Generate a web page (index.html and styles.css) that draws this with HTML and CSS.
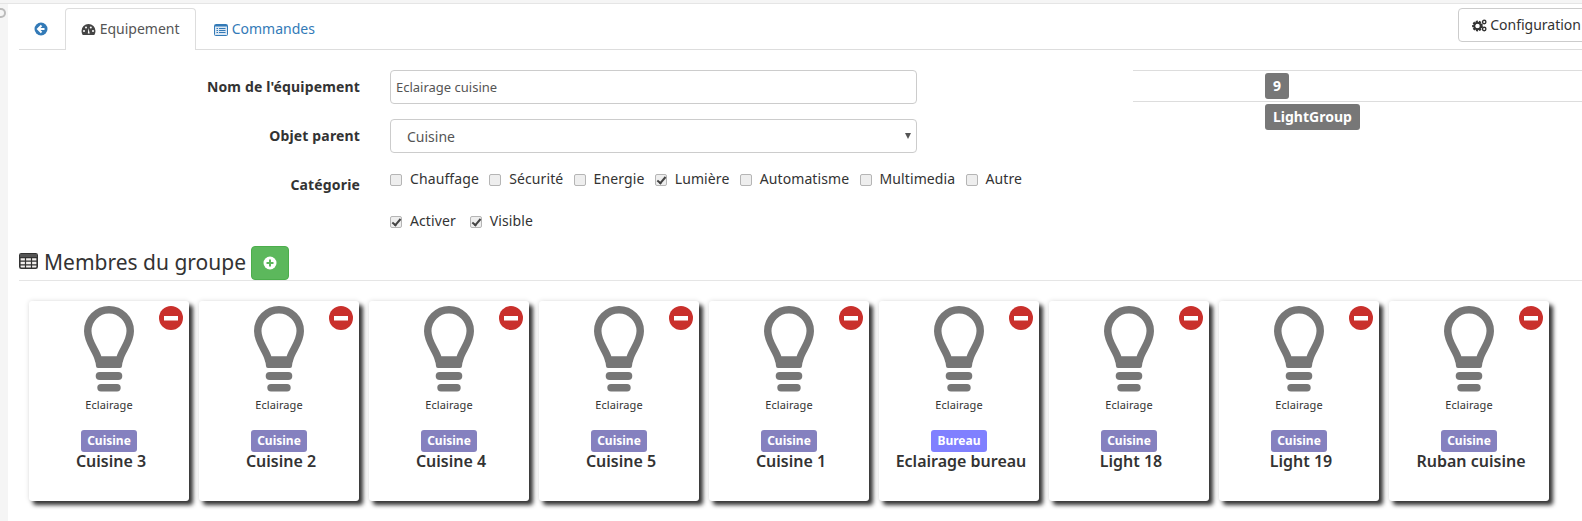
FILE: index.html
```html
<!DOCTYPE html>
<html lang="fr">
<head>
  <meta charset="UTF-8">
  <title>Equipement - Eclairage cuisine</title>
  <link rel="stylesheet" href="styles.css">
</head>
<body>
  <svg class="defs" width="0" height="0">
    <symbol id="bulb" viewBox="0 0 50 86">
      <path d="M14.500 54 C13 45 3.750 37 3.750 25 A21.250 21.250 0 0 1 46.250 25 C46.250 37 37 45 35.500 54 Z" fill="none" stroke="currentColor" stroke-width="7.500" stroke-linejoin="round"/>
      <path d="M11 52 H39 L38 60 Q38 62 36 62 H14 Q12 62 12 60 Z" fill="currentColor"/>
      <rect x="11.700" y="66" width="26.600" height="8" rx="4" fill="currentColor"/>
      <rect x="13.300" y="78" width="23.400" height="7.500" rx="3.700" fill="currentColor"/>
    </symbol>
    <symbol id="remove" viewBox="0 0 24 24">
      <circle cx="12" cy="12" r="12" fill="#c9302c"/>
      <rect x="5" y="10" width="14" height="4.500" fill="#fff"/>
    </symbol>
  </svg>

  <div class="topbar"></div>
  <div class="page">
    <div class="gutter"><span class="gutter-dot"></span></div>
    <div class="content">
      <div class="tabs">
        <a class="tab tab-back">
          <svg class="icon" width="14" height="14" viewBox="0 0 14 14"><circle cx="7" cy="7" r="6.500" fill="#337ab7"/><path d="M7.500 3.500 4 7l3.500 3.500M4.500 7H10.500" fill="none" stroke="#fff" stroke-width="2"/></svg>
        </a>
        <a class="tab active">
          <svg class="icon" width="15" height="13" viewBox="0 0 15 13"><path d="M7.500 1A7 7 0 0 0 .5 8c0 1.500.4 2.800 1.200 4h11.600c.8-1.200 1.200-2.500 1.200-4a7 7 0 0 0-7-7z" fill="#444"/><circle cx="3" cy="8" r="1" fill="#fff"/><circle cx="5" cy="4.500" r="1" fill="#fff"/><circle cx="9.800" cy="4.500" r="1" fill="#fff"/><circle cx="12" cy="8" r="1" fill="#fff"/><path d="M6.800 10.500 7.500 5l1.200 5.500z" fill="#fff"/></svg>
          Equipement
        </a>
        <a class="tab">
          <svg class="icon" width="14" height="12" viewBox="0 0 14 12"><rect x=".5" y=".5" width="13" height="11" rx="1" fill="#dbe7f3" stroke="#337ab7"/><path d="M1 1h12v1.500H1z" fill="#337ab7"/><path d="M2.500 4h1.500v1H2.500zM2.500 6h1.500v1H2.500zM2.500 8h1.500v1H2.500zM5 4h6.500v1H5zM5 6h6.500v1H5zM5 8h6.500v1H5z" fill="#337ab7"/></svg>
          Commandes
        </a>
        <button class="btn-config">
          <svg class="icon" width="15" height="13" viewBox="0 0 15 13"><circle cx="5.500" cy="7" r="4" fill="none" stroke="#333" stroke-width="2.800" stroke-dasharray="1.900 .9"/><circle cx="5.500" cy="7" r="3.300" fill="none" stroke="#333" stroke-width="2"/><circle cx="12.200" cy="3" r="1.700" fill="none" stroke="#333" stroke-width="1.400"/><circle cx="12.200" cy="10" r="1.700" fill="none" stroke="#333" stroke-width="1.400"/></svg>
          Configuration
        </button>
      </div>

      <div class="form-wrap">
        <form class="form">
          <label class="form-label">Nom de l'équipement</label>
          <input class="form-input" type="text" value="Eclairage cuisine">

          <label class="form-label">Objet parent</label>
          <div class="form-select">Cuisine<span class="caret"></span></div>

          <label class="form-label form-label-check">Catégorie</label>
          <div class="check-row">
            <label class="check"><input type="checkbox">Chauffage</label>
            <label class="check"><input type="checkbox">Sécurité</label>
            <label class="check"><input type="checkbox">Energie</label>
            <label class="check"><input type="checkbox" checked>Lumière</label>
            <label class="check"><input type="checkbox">Automatisme</label>
            <label class="check"><input type="checkbox">Multimedia</label>
            <label class="check"><input type="checkbox">Autre</label>
          </div>

          <span></span>
          <div class="check-row check-row-tight">
            <label class="check"><input type="checkbox" checked>Activer</label>
            <label class="check"><input type="checkbox" checked>Visible</label>
          </div>
        </form>

        <div class="info">
          <div class="info-row"><span class="tag">9</span></div>
          <div class="info-last"><span class="tag">LightGroup</span></div>
        </div>
      </div>

      <div class="group-head">
        <svg class="icon icon-table" width="19" height="16" viewBox="0 0 19 16"><rect x=".8" y=".8" width="17.400" height="14.400" rx="1.500" fill="#f3f0ee" stroke="#333" stroke-width="1.600"/><path d="M1 4.700h17M1 8.200h17M1 11.800h17M6.500 4v11M12.500 4v11" stroke="#333" stroke-width="1.200"/><path d="M1 1h17v3H1z" fill="#555"/></svg>
        <h2 class="group-title">Membres du groupe</h2>
        <button class="btn-add">
          <svg width="14" height="14" viewBox="0 0 14 14"><circle cx="7" cy="7" r="6.500" fill="#fff"/><path d="M7 3.500v7M3.500 7h7" stroke="#5cb85c" stroke-width="2"/></svg>
        </button>
      </div>

      <div class="cards">
        <div class="card">
          <svg class="remove"><use href="#remove"/></svg>
          <svg class="bulb"><use href="#bulb"/></svg>
          <div class="card-type">Eclairage</div>
          <span class="card-badge">Cuisine</span>
          <div class="card-name">Cuisine 3</div>
        </div>
        <div class="card">
          <svg class="remove"><use href="#remove"/></svg>
          <svg class="bulb"><use href="#bulb"/></svg>
          <div class="card-type">Eclairage</div>
          <span class="card-badge">Cuisine</span>
          <div class="card-name">Cuisine 2</div>
        </div>
        <div class="card">
          <svg class="remove"><use href="#remove"/></svg>
          <svg class="bulb"><use href="#bulb"/></svg>
          <div class="card-type">Eclairage</div>
          <span class="card-badge">Cuisine</span>
          <div class="card-name">Cuisine 4</div>
        </div>
        <div class="card">
          <svg class="remove"><use href="#remove"/></svg>
          <svg class="bulb"><use href="#bulb"/></svg>
          <div class="card-type">Eclairage</div>
          <span class="card-badge">Cuisine</span>
          <div class="card-name">Cuisine 5</div>
        </div>
        <div class="card">
          <svg class="remove"><use href="#remove"/></svg>
          <svg class="bulb"><use href="#bulb"/></svg>
          <div class="card-type">Eclairage</div>
          <span class="card-badge">Cuisine</span>
          <div class="card-name">Cuisine 1</div>
        </div>
        <div class="card">
          <svg class="remove"><use href="#remove"/></svg>
          <svg class="bulb"><use href="#bulb"/></svg>
          <div class="card-type">Eclairage</div>
          <span class="card-badge card-badge-alt">Bureau</span>
          <div class="card-name">Eclairage bureau</div>
        </div>
        <div class="card">
          <svg class="remove"><use href="#remove"/></svg>
          <svg class="bulb"><use href="#bulb"/></svg>
          <div class="card-type">Eclairage</div>
          <span class="card-badge">Cuisine</span>
          <div class="card-name">Light 18</div>
        </div>
        <div class="card">
          <svg class="remove"><use href="#remove"/></svg>
          <svg class="bulb"><use href="#bulb"/></svg>
          <div class="card-type">Eclairage</div>
          <span class="card-badge">Cuisine</span>
          <div class="card-name">Light 19</div>
        </div>
        <div class="card">
          <svg class="remove"><use href="#remove"/></svg>
          <svg class="bulb"><use href="#bulb"/></svg>
          <div class="card-type">Eclairage</div>
          <span class="card-badge">Cuisine</span>
          <div class="card-name">Ruban cuisine</div>
        </div>
      </div>
    </div>
  </div>
</body>
</html>
```

FILE: styles.css
```css
html, body {
  height: 100%;
}
body {
  margin: 0;
  font-family: "Noto Sans", "Open Sans", sans-serif;
  font-size: 14px;
  color: #333;
  background-color: #fff;
  overflow: hidden;
}
.defs {
  display: block;
  height: 0;
}
.topbar {
  height: 3px;
  background-color: #f5f5f5;
  border-bottom: 1px solid #e5e5e5;
}
.page {
  display: flex;
  height: 517px;
}
.gutter {
  width: 8px;
  flex: none;
  background-color: #f5f5f5;
}
.gutter-dot {
  display: block;
  width: 6px;
  height: 10px;
  margin-top: 4px;
  border: 2px solid #bbb;
  border-left: none;
  border-radius: 0 6px 6px 0;
  box-sizing: border-box;
}
.content {
  flex: 1;
  min-width: 0;
  padding-left: 11px;
}
.icon {
  vertical-align: -2px;
}

/* tabs */
.tabs {
  display: flex;
  height: 46px;
  padding-top: 4px;
  box-sizing: border-box;
  border-bottom: 1px solid #ddd;
}
.tab {
  display: block;
  height: 42px;
  box-sizing: border-box;
  padding: 11px 15px 0;
  color: #337ab7;
  border: 1px solid transparent;
  border-bottom: none;
  border-radius: 4px 4px 0 0;
  line-height: 18px;
  white-space: nowrap;
}
.tab-back {
  width: 46px;
  padding-left: 14px;
}
.tab.active {
  width: 131px;
  margin-right: 2px;
  color: #555;
  background-color: #fff;
  border-color: #ddd;
}
.btn-config {
  height: 34px;
  margin-left: auto;
  margin-right: -12px;
  padding: 0 12px 2px 13px;
  font: inherit;
  color: #333;
  background-color: #fff;
  border: 1px solid #ccc;
  border-radius: 4px;
  white-space: nowrap;
}

/* form */
.form-wrap {
  display: flex;
  padding-top: 20px;
}
.form {
  display: grid;
  grid-template-columns: 341px 527px;
  column-gap: 30px;
  row-gap: 15px;
  align-items: center;
  width: 898px;
}
.form-label {
  padding-bottom: 2px;
  text-align: right;
  font-weight: 700;
  letter-spacing: .15px;
}
.form-label-check {
  align-self: start;
  padding: 7px 0 0;
}
.form-input, .form-select {
  height: 34px;
  box-sizing: border-box;
  border: 1px solid #ccc;
  border-radius: 4px;
  color: #555;
  background-color: #fff;
}
.form-input {
  width: 100%;
  padding: 0 5px;
  font: inherit;
  font-size: 13px;
}
.form-select {
  position: relative;
  padding: 0 16px;
  line-height: 34px;
}
.caret {
  position: absolute;
  right: 5px;
  top: 13px;
  border: 3.500px solid transparent;
  border-top: 6px solid #555;
  border-bottom: none;
}
.check-row {
  display: flex;
  gap: 10.300px;
  height: 27px;
  padding-top: 1px;
  box-sizing: border-box;
  white-space: nowrap;
  letter-spacing: .1px;
}
.check-row-tight {
  gap: 14px;
}
.check {
  display: flex;
  align-items: flex-start;
  line-height: 20px;
}
.check input {
  appearance: none;
  position: relative;
  width: 12px;
  height: 12px;
  margin: 5px 8px 0 0;
  box-sizing: border-box;
  background-color: #eee;
  border: 1px solid #b5b5b5;
  border-radius: 2px;
}
.check input:checked::after {
  content: "";
  position: absolute;
  left: 3px;
  top: 0;
  width: 3px;
  height: 7px;
  border: solid #444;
  border-width: 0 2px 2px 0;
  transform: rotate(40deg);
}

/* info on the right */
.info {
  flex: 1;
  margin-left: 216px;
}
.info-row {
  height: 32px;
  padding: 2px 0 0 132px;
  box-sizing: border-box;
  border-top: 1px solid #ddd;
  border-bottom: 1px solid #ddd;
}
.info-last {
  padding: 2px 0 0 132px;
}
.tag {
  display: inline-block;
  height: 26px;
  padding: 0 8px;
  line-height: 26px;
  font-weight: 700;
  color: #fff;
  background-color: #777;
  border-radius: 3px;
}

/* group */
.group-head {
  display: flex;
  align-items: flex-end;
  gap: 6px;
  height: 36px;
  margin-top: 8px;
  box-sizing: border-box;
  border-bottom: 1px solid #e5e5e5;
}
.icon-table {
  margin-bottom: 11px;
}
.group-title {
  margin: 0 0 4px;
  font-size: 21px;
  font-weight: 400;
}
.btn-add {
  display: flex;
  align-items: center;
  justify-content: center;
  width: 38px;
  height: 34px;
  margin-left: -1px;
  padding: 0;
  background-color: #5cb85c;
  border: 1px solid #4cae4c;
  border-radius: 4px;
}
.cards {
  display: flex;
  gap: 10px;
  padding: 20px 0 0 10px;
}
.card {
  position: relative;
  display: flex;
  flex-direction: column;
  align-items: center;
  flex: none;
  width: 160px;
  height: 200px;
  box-sizing: border-box;
  padding-top: 5px;
  background-color: #fff;
  border-radius: 3px;
  box-shadow: 4px 4px 4px #333, 0 0 5px #ddd;
}
.remove {
  position: absolute;
  top: 5px;
  right: 6px;
  width: 24px;
  height: 24px;
}
.bulb {
  width: 50px;
  height: 86px;
  color: #777;
}
.card-type {
  margin-top: 4px;
  font-size: 11px;
  line-height: 17px;
  letter-spacing: .1px;
}
.card-badge {
  margin-top: 17px;
  height: 22px;
  padding: 0 6px;
  line-height: 22px;
  font-size: 12px;
  font-weight: 700;
  color: #fff;
  background-color: #8581bf;
  border-radius: 3px;
}
.card-badge-alt {
  background-color: #8080ff;
}
.card-name {
  padding-left: 4px;
  font-size: 16px;
  font-weight: 600;
  line-height: 18px;
  white-space: nowrap;
}
```
